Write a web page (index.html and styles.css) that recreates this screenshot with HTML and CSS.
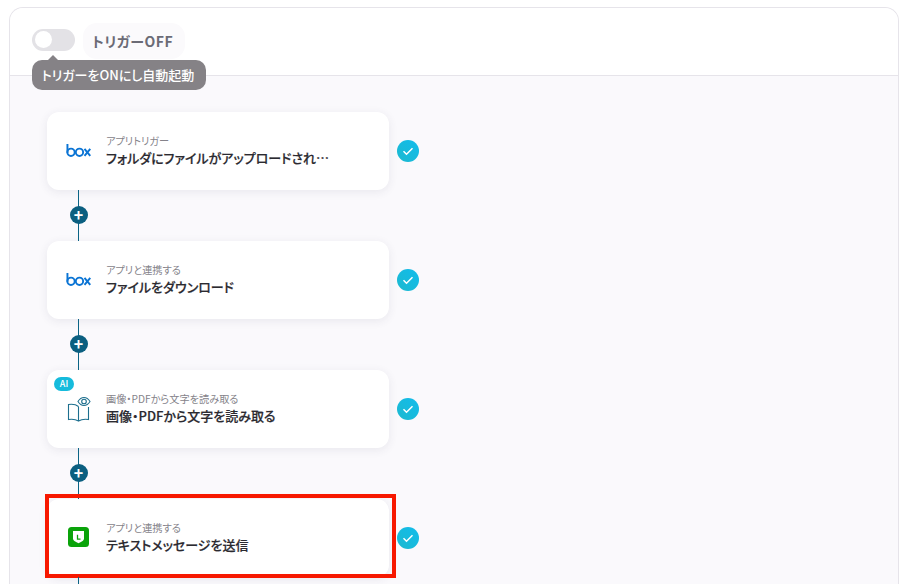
FILE: index.html
```html
<!DOCTYPE html>
<html lang="ja">
<head>
<meta charset="utf-8">
<title>フロー</title>
<link rel="stylesheet" href="styles.css">
</head>
<body>
<main class="panel">
  <header class="head">
    <div class="toggle"><span class="knob"></span></div>
    <div class="state">トリガーOFF</div>
    <div class="tip">トリガーをONにし自動起動</div>
  </header>
  <section class="flow">
    <div class="step">
      <div class="card">
        <svg class="icon box" viewBox="0 0 27 14.500" width="26" height="14"><g fill="none" stroke="#0b74d4" stroke-width="2"><path d="M1.500 0v9"/><circle cx="5.200" cy="8.600" r="3.800"/><circle cx="14" cy="8.600" r="3.800"/><path d="M19.200 5l6 7.400M25.200 5l-6 7.400"/></g></svg>
        <div class="txt"><div class="sub">アプリトリガー</div><div class="title">フォルダにファイルがアップロードされ…</div></div>
      </div>
      <svg class="check" viewBox="0 0 22 22" width="22" height="22"><defs><linearGradient id="cg" x1="0" y1="1" x2="1" y2="0"><stop offset="0" stop-color="#1cb9cf"/><stop offset="1" stop-color="#12bcec"/></linearGradient></defs><circle cx="11" cy="11" r="11" fill="url(#cg)"/><path d="M6.500 11.200l3 3 6-6" fill="none" stroke="#fff" stroke-width="1.500"/></svg>
    </div>
    <div class="link"><span class="plus">+</span></div>
    <div class="step">
      <div class="card">
        <svg class="icon box" viewBox="0 0 27 14.500" width="26" height="14"><g fill="none" stroke="#0b74d4" stroke-width="2"><path d="M1.500 0v9"/><circle cx="5.200" cy="8.600" r="3.800"/><circle cx="14" cy="8.600" r="3.800"/><path d="M19.200 5l6 7.400M25.200 5l-6 7.400"/></g></svg>
        <div class="txt"><div class="sub">アプリと連携する</div><div class="title">ファイルをダウンロード</div></div>
      </div>
      <svg class="check" viewBox="0 0 22 22" width="22" height="22"><circle cx="11" cy="11" r="11" fill="url(#cg)"/><path d="M6.500 11.200l3 3 6-6" fill="none" stroke="#fff" stroke-width="1.500"/></svg>
    </div>
    <div class="link"><span class="plus">+</span></div>
    <div class="step">
      <div class="card">
        <span class="ai">AI</span>
        <svg class="icon" viewBox="0 0 26 26" width="26" height="26"><g fill="none" stroke="#1d6f8e" stroke-width="1.100"><path d="M11.500 10.500C9 8.500 5 8 1.500 8.500V23.500c3.500-.5 7.500 0 10 1.500 2.500-1.500 6.500-2 10-1.500V11"/><path d="M11.500 10.500V25"/><path d="M11 5.500C12.500 3 14.500 1.500 17 1.500s4.500 1.500 6 4C21.500 8 19.500 9.500 17 9.500S12.500 8 11 5.500z"/><circle cx="17" cy="5.500" r="2.300"/></g></svg>
        <div class="txt"><div class="sub">画像・PDFから文字を読み取る</div><div class="title">画像・PDFから文字を読み取る</div></div>
      </div>
      <svg class="check" viewBox="0 0 22 22" width="22" height="22"><circle cx="11" cy="11" r="11" fill="url(#cg)"/><path d="M6.500 11.200l3 3 6-6" fill="none" stroke="#fff" stroke-width="1.500"/></svg>
    </div>
    <div class="link"><span class="plus">+</span></div>
    <div class="step">
      <div class="card">
        <svg class="icon" viewBox="0 0 26 26" width="26" height="26"><rect x="1" y="2" width="21" height="20" rx="3.500" fill="#0aa30a"/><path d="M6 6h11v7.500c0 2.200-3 3.600-5.500 4.700C9 17.100 6 15.700 6 13.500z" fill="#fff"/><path d="M10.500 9.800v4.400h3" fill="none" stroke="#0aa30a" stroke-width="1.300"/></svg>
        <div class="txt"><div class="sub">アプリと連携する</div><div class="title">テキストメッセージを送信</div></div>
      </div>
      <svg class="check" viewBox="0 0 22 22" width="22" height="22"><circle cx="11" cy="11" r="11" fill="url(#cg)"/><path d="M6.500 11.200l3 3 6-6" fill="none" stroke="#fff" stroke-width="1.500"/></svg>
      <div class="mark"></div>
    </div>
    <div class="link"></div>
  </section>
</main>
</body>
</html>
```
FILE: styles.css
```css
* { box-sizing: border-box; }
html, body { margin: 0; height: 584px; overflow: hidden; background: #fff; }
body { padding: 7px 5px 0 9px; font-family: "Noto Sans CJK JP", "Noto Sans", sans-serif; font-feature-settings: "palt"; }
.panel { border: 1px solid #e6e4ea; border-bottom: 0; border-radius: 14px 14px 0 0; height: 577px; overflow: hidden; background: #faf9fc; }
.head { position: relative; height: 68px; background: #fff; border-bottom: 1px solid #e6e4ea; display: flex; align-items: flex-start; padding: 15px 0 0 22px; }
.toggle { width: 43px; height: 22px; margin-top: 6px; border-radius: 11px; background: #e3e2e6; padding: 2px 0 0 3px; }
.knob { display: block; width: 17px; height: 17px; border-radius: 50%; background: #fff; }
.state { margin-left: 8px; width: 102px; height: 36px; padding-left: 9px; border-radius: 14px; background: #fbfafc; color: #6b6b76; font-size: 14px; font-weight: 700; letter-spacing: .5px; line-height: 36px; }
.tip { position: absolute; left: 22px; top: 52px; height: 30px; width: 174px; padding-right: 2px; text-align: center; border-radius: 10px; background: #858286; color: #fff; font-size: 13px; font-weight: 500; line-height: 30px; white-space: nowrap; z-index: 2; }
.tip::before { content: ""; position: absolute; left: 16px; top: -5px; border: 5px solid transparent; border-top: 0; border-bottom-color: #858286; }
.flow { padding: 36px 0 0 37px; }
.step { position: relative; display: flex; align-items: center; gap: 7.500px; height: 78px; }
.card { position: relative; width: 342px; height: 78px; background: #fff; border-radius: 12px; box-shadow: 0 2px 10px rgba(60, 50, 90, .09); display: flex; align-items: center; padding-left: 20px; }
.icon { flex: none; width: 26px; margin-right: 13px; }
.box { margin-left: -1px; margin-right: 14px; }
.txt { min-width: 0; margin-bottom: 2px; }
.sub { color: #85838a; font-size: 10.200px; line-height: 15px; }
.title { color: #2b2a30; font-size: 13px; font-weight: 500; line-height: 19px; white-space: nowrap; -webkit-text-stroke: .2px #2b2a30; }
.ai { position: absolute; left: 7px; top: 7px; width: 20px; height: 14px; border-radius: 7px; background: #16bbdc; color: #fff; font-size: 9px; font-weight: 500; line-height: 14px; text-align: center; }
.check { flex: none; }
.link { position: relative; width: 1px; height: 51px; margin-left: 31px; background: #0b6485; display: flex; align-items: flex-start; justify-content: center; padding-top: 16px; }
.plus { flex: none; width: 18px; height: 18px; border-radius: 50%; background: #0b5f80; color: #fff; font-size: 16px; font-weight: 700; line-height: 17px; text-align: center; }
.mark { position: absolute; left: -2px; top: -5px; width: 351px; height: 84px; border: 4px solid #f71800; }
```
